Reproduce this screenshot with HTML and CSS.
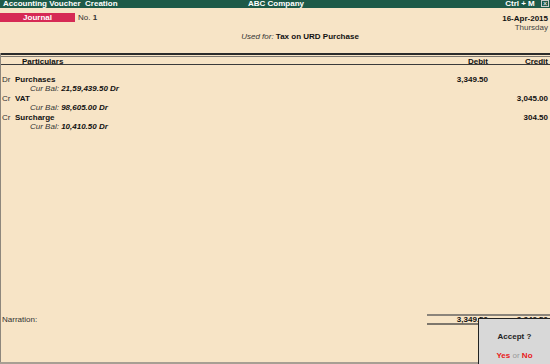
FILE: index.html
```html
<!DOCTYPE html>
<html lang="en">
<head>
    <meta charset="UTF-8">
    <title>Accounting Voucher Creation</title>
    <link rel="stylesheet" href="styles.css">
</head>
<body>
    <div class="titlebar">
        <span class="title-left">Accounting Voucher&nbsp; Creation</span>
        <span class="title-mid">ABC Company</span>
        <span class="title-right">Ctrl + M <span class="closebox">&#215;</span></span>
    </div>

    <div class="voucher">
        <div class="head">
            <div class="head-left">
                <span class="vtype">Journal</span>
                <span class="vno">No. <b>1</b></span>
            </div>
            <div class="head-right">
                <div class="date">16-Apr-2015</div>
                <div class="day">Thursday</div>
            </div>
        </div>
        <div class="usedfor"><i>Used for:</i> <b>Tax on URD Purchase</b></div>

        <div class="grid">
            <div class="cols">
                <span class="c-part">Particulars</span>
                <span class="c-dr">Debit</span>
                <span class="c-cr">Credit</span>
            </div>

            <div class="entries">
                <div class="entry">
                    <div class="line">
                        <span class="drcr">Dr</span>
                        <span class="ledger">Purchases</span>
                        <span class="amt-dr">3,349.50</span>
                        <span class="amt-cr"></span>
                    </div>
                    <div class="bal"><i>Cur Bal:</i> <b><i>21,59,439.50 Dr</i></b></div>
                </div>
                <div class="entry">
                    <div class="line">
                        <span class="drcr">Cr</span>
                        <span class="ledger">VAT</span>
                        <span class="amt-dr"></span>
                        <span class="amt-cr">3,045.00</span>
                    </div>
                    <div class="bal"><i>Cur Bal:</i> <b><i>98,605.00 Dr</i></b></div>
                </div>
                <div class="entry">
                    <div class="line">
                        <span class="drcr">Cr</span>
                        <span class="ledger">Surcharge</span>
                        <span class="amt-dr"></span>
                        <span class="amt-cr">304.50</span>
                    </div>
                    <div class="bal"><i>Cur Bal:</i> <b><i>10,410.50 Dr</i></b></div>
                </div>
            </div>

            <div class="foot">
                <span class="narration">Narration:</span>
                <div class="totals">
                    <span class="amt-dr">3,349.50</span>
                    <span class="amt-cr">3,349.50</span>
                </div>
            </div>
        </div>

        <div class="accept">
            <div class="accept-q">Accept ?</div>
            <div class="accept-yn"><span class="red">Yes</span> <span class="or">or</span> <span class="red">No</span></div>
        </div>
    </div>
</body>
</html>
```

FILE: styles.css
```css
* {
    box-sizing: border-box;
}
body {
    margin: 0;
    width: 550px;
    height: 364px;
    overflow: hidden;
    font-family: "Liberation Sans", Arial, sans-serif;
    font-size: 8px;
    color: #111;
    background-color: #f7e4c6;
}
.titlebar {
    height: 8px;
    background-color: #1d5a48;
    color: white;
    font-weight: bold;
    font-size: 8px;
    line-height: 8px;
    display: flex;
    align-items: center;
    padding-left: 3px;
}
.title-left {
    flex: 1;
}
.title-mid {
    flex: 1;
    text-align: center;
}
.title-right {
    flex: 1;
    text-align: right;
    padding-right: 1px;
}
.closebox {
    display: inline-block;
    width: 8px;
    height: 7px;
    margin-left: 4px;
    border: 1px solid #ccc;
    font-size: 7px;
    line-height: 5px;
    text-align: center;
    color: #ddd;
    vertical-align: top;
}
.voucher {
    position: relative;
    height: 356px;
    border-bottom: 2px solid #a79f93;
    display: flex;
    flex-direction: column;
}
.head {
    display: flex;
    justify-content: space-between;
    align-items: flex-start;
}
.head-left {
    display: flex;
    align-items: center;
    gap: 3px;
    padding-top: 5px;
}
.vtype {
    display: inline-block;
    width: 75px;
    height: 9px;
    background-color: #d62a55;
    color: white;
    font-weight: bold;
    text-align: center;
    line-height: 9px;
}
.vno {
    color: #333;
}
.head-right {
    text-align: right;
    padding-right: 2px;
    padding-top: 6px;
    line-height: 9px;
}
.date {
    font-weight: bold;
}
.day {
    color: #444;
}
.usedfor {
    text-align: center;
    line-height: 10px;
    padding-left: 50px;
}
.usedfor i {
    color: #333;
}
.grid {
    flex: 1;
    display: flex;
    flex-direction: column;
    margin-top: 11px;
    border-left: 1px solid #8e877d;
}
.cols {
    display: flex;
    border-top: 2px solid #2b2b2b;
    border-bottom: 1px solid #3b3b3b;
    box-shadow: inset 0 1px 0 #f7e4c6, inset 0 2px 0 #7d776f;
    padding-top: 2px;
    height: 12px;
    font-weight: bold;
    line-height: 9px;
}
.c-part {
    flex: 1;
    padding-left: 21px;
}
.c-dr, .amt-dr {
    width: 60px;
    text-align: right;
}
.c-cr, .amt-cr {
    width: 62px;
    text-align: right;
    padding-right: 2px;
}
.entries {
    flex: 1;
    padding-top: 10px;
}
.entry {
    margin-bottom: 1px;
}
.line {
    display: flex;
    line-height: 9px;
    height: 9px;
}
.drcr {
    width: 14px;
    padding-left: 1px;
    color: #333;
}
.ledger {
    flex: 1;
    font-weight: bold;
}
.line .amt-dr, .line .amt-cr {
    font-weight: bold;
}
.bal {
    padding-left: 29px;
    line-height: 9px;
    height: 9px;
}
.bal i {
    color: #333;
}
.bal b i {
    color: #111;
}
.foot {
    display: flex;
    align-items: center;
    height: 51px;
    padding-bottom: 35px;
}
.narration {
    flex: 1;
    padding-left: 1px;
    color: #333;
}
.totals {
    display: flex;
    width: 123px;
    font-weight: bold;
    border-top: 2px solid #8b847a;
    border-bottom: 2px solid #7d766c;
    height: 11px;
    line-height: 8px;
}
.totals .amt-dr {
    width: 61px;
}
.accept {
    position: absolute;
    right: 0;
    bottom: -2px;
    width: 72px;
    height: 46px;
    background-color: #d8d8d8;
    border: 1px solid #222;
    border-bottom: none;
    border-right: none;
    text-align: center;
    font-weight: bold;
}
.accept-q {
    margin-top: 13px;
    color: #222;
}
.accept-yn {
    margin-top: 10px;
}
.red {
    color: #e81919;
}
.or {
    color: #999;
    font-weight: normal;
}
```
